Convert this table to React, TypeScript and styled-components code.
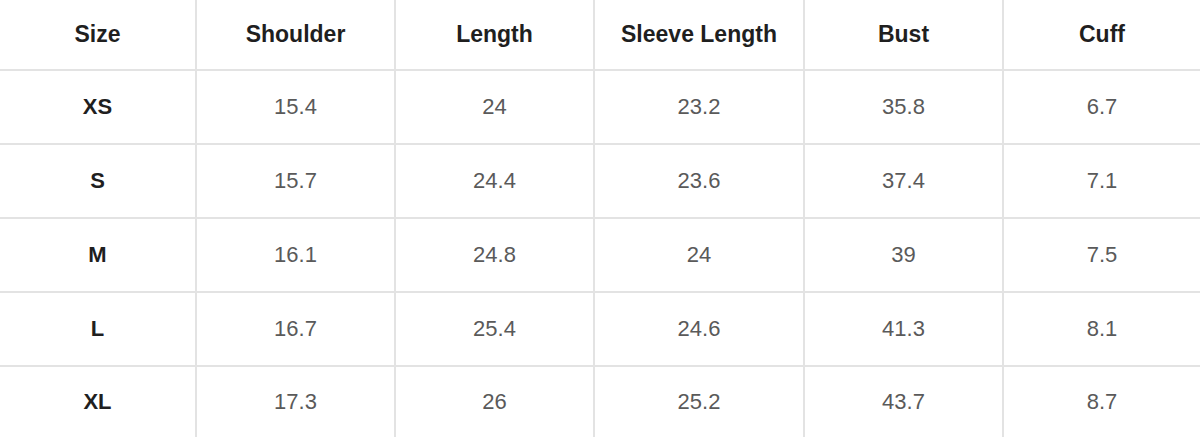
import React from "react";
import styled, { createGlobalStyle } from "styled-components";

const Global = createGlobalStyle`
  html, body { margin: 0; padding: 0; background: #fff; }
  body { font-family: "Liberation Sans", Arial, sans-serif; overflow: hidden; }
`;

const Table = styled.div`
  display: grid;
  width: 1200px;
  grid-template-columns: 195px 197px 197px 208px 197px 196px;
  grid-template-rows: 69px 72px 72px 72px 72px 80px;
  gap: 2px;
  background: #e3e3e3;
  height: 437px;
  overflow: hidden;
`;

const Cell = styled.div<{ $head?: boolean; $bold?: boolean }>`
  background: #fff;
  display: flex;
  align-items: center;
  justify-content: center;
  font-size: ${(p) => (p.$head ? "23px" : "22px")};
  font-weight: ${(p) => (p.$head || p.$bold ? 700 : 400)};
  color: ${(p) => (p.$head || p.$bold ? "#1f1f1f" : "#5a5a5a")};
`;

const LastCell = styled(Cell)`
  align-items: flex-start;
  padding-top: 22px;
`;

const headers = ["Size", "Shoulder", "Length", "Sleeve Length", "Bust", "Cuff"];
const rows = [
  ["XS", "15.4", "24", "23.2", "35.8", "6.7"],
  ["S", "15.7", "24.4", "23.6", "37.4", "7.1"],
  ["M", "16.1", "24.8", "24", "39", "7.5"],
  ["L", "16.7", "25.4", "24.6", "41.3", "8.1"],
  ["XL", "17.3", "26", "25.2", "43.7", "8.7"],
];

export default function App() {
  return (
    <>
      <Global />
      <Table>
        {headers.map((h) => (
          <Cell key={h} $head>
            {h}
          </Cell>
        ))}
        {rows.map((r, ri) =>
          r.map((v, ci) => {
            const C = ri === rows.length - 1 ? LastCell : Cell;
            return (
              <C key={`${ri}-${ci}`} $bold={ci === 0}>
                {v}
              </C>
            );
          })
        )}
      </Table>
    </>
  );
}
